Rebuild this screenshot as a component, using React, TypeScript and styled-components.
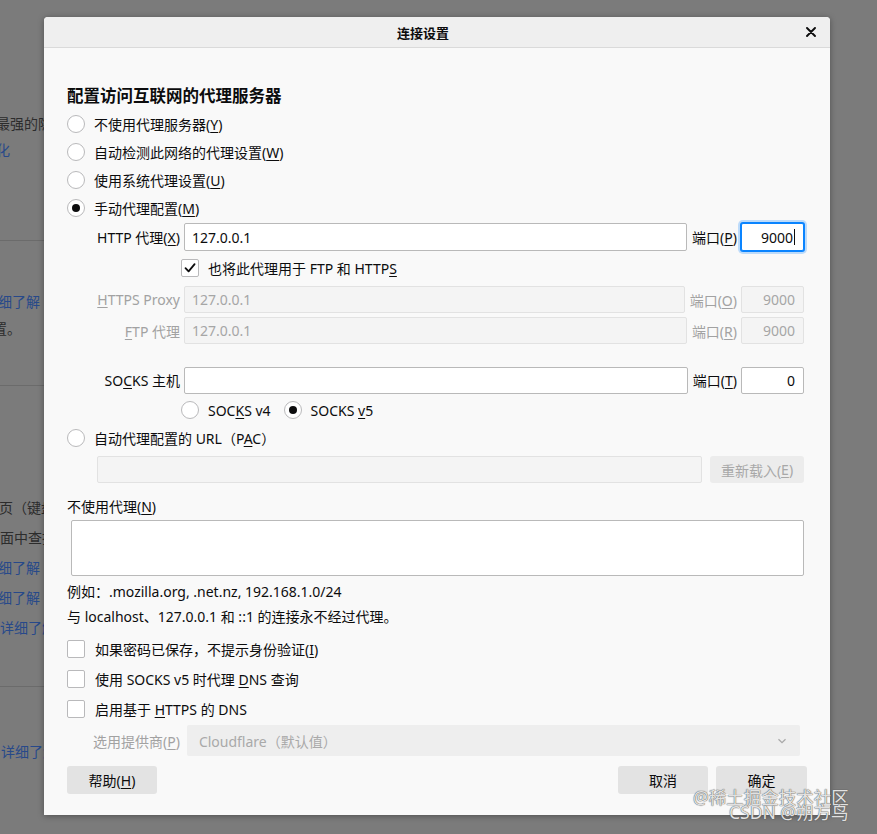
import styled, { createGlobalStyle } from 'styled-components';

const GlobalStyle = createGlobalStyle`
  html, body {
    margin: 0;
    padding: 0;
  }
  body {
    width: 877px;
    height: 834px;
    overflow: hidden;
    background: #7b7b7b;
    font-family: "Noto Sans", "Noto Sans CJK SC", sans-serif;
  }
`;

type BackItem =
  | { kind: 'text'; text: string; gap: number; shift: number; link?: boolean }
  | { kind: 'rule'; gap: number };

// the settings page behind the dimmed overlay, only its left edge shows
const backItems: BackItem[] = [
  { kind: 'text', text: '最强的隐私保护', gap: 114, shift: -4 },
  { kind: 'text', text: '优化', gap: 6, shift: -18, link: true },
  { kind: 'rule', gap: 80 },
  { kind: 'text', text: '详细了解', gap: 51, shift: -16, link: true },
  { kind: 'text', text: '设置。', gap: 7, shift: -21 },
  { kind: 'rule', gap: 46 },
  { kind: 'text', text: '页（键盘', gap: 112, shift: -1 },
  { kind: 'text', text: '面中查找', gap: 10, shift: 0 },
  { kind: 'text', text: '详细了解', gap: 10, shift: -16, link: true },
  { kind: 'text', text: '详细了解', gap: 10, shift: -16, link: true },
  { kind: 'text', text: '详细了解', gap: 10, shift: 0, link: true },
  { kind: 'rule', gap: 48 },
  { kind: 'text', text: '详细了解', gap: 55, shift: 1, link: true },
];

const Key = ({ children }: { children: string }) => <AccessKey>{children}</AccessKey>;

const CheckMark = () => (
  <svg width="14" height="14" viewBox="0 0 14 14">
    <path d="M2.5 7.2 L5.6 10.4 L11.6 3.2" fill="none" stroke="#0c0c0d" strokeWidth="1.8" strokeLinecap="round" strokeLinejoin="round" />
  </svg>
);

const App = () => {
  return (
    <>
      <GlobalStyle />
      <Screen>
        <BackPage>
          {backItems.map((item, i) =>
            item.kind === 'rule' ? (
              <BackRule key={i} $gap={item.gap} />
            ) : (
              <BackLine key={i} $gap={item.gap} $shift={item.shift} $link={item.link}>
                {item.text}
              </BackLine>
            )
          )}
        </BackPage>

        <Dialog>
          <DialogHeader>
            <DialogTitle>连接设置</DialogTitle>
            <CloseButton>
              <svg width="10" height="10" viewBox="0 0 10 10">
                <path d="M1 1 L9 9 M9 1 L1 9" stroke="#0c0c0d" strokeWidth="1.9" strokeLinecap="round" />
              </svg>
            </CloseButton>
          </DialogHeader>

          <DialogBody>
            <SectionHeading>配置访问互联网的代理服务器</SectionHeading>

            <ChoiceRow $height={28}>
              <Radio />
              <span>不使用代理服务器(<Key>Y</Key>)</span>
            </ChoiceRow>
            <ChoiceRow $height={28}>
              <Radio />
              <span>自动检测此网络的代理设置(<Key>W</Key>)</span>
            </ChoiceRow>
            <ChoiceRow $height={28}>
              <Radio />
              <span>使用系统代理设置(<Key>U</Key>)</span>
            </ChoiceRow>
            <ChoiceRow $height={28}>
              <Radio $checked />
              <span>手动代理配置(<Key>M</Key>)</span>
            </ChoiceRow>

            <FieldRow $height={30}>
              <FieldLabel>HTTP 代理(<Key>X</Key>)</FieldLabel>
              <TextBox $height={28}>127.0.0.1</TextBox>
              <PortLabel>端口(<Key>P</Key>)</PortLabel>
              <PortBox $height={28} $focused>
                9000<Caret />
              </PortBox>
            </FieldRow>

            <ChoiceRow $height={32} $indent={114} $gap={9}>
              <Checkbox $checked>
                <CheckMark />
              </Checkbox>
              <span>也将此代理用于 FTP 和 HTTP<Key>S</Key></span>
            </ChoiceRow>

            <FieldRow $height={31}>
              <FieldLabel $disabled><Key>H</Key>TTPS Proxy</FieldLabel>
              <TextBox $disabled>127.0.0.1</TextBox>
              <PortLabel $disabled>端口(<Key>O</Key>)</PortLabel>
              <PortBox $disabled>9000</PortBox>
            </FieldRow>

            <FieldRow $height={31}>
              <FieldLabel $disabled><Key>F</Key>TP 代理</FieldLabel>
              <TextBox $disabled>127.0.0.1</TextBox>
              <PortLabel $disabled>端口(<Key>R</Key>)</PortLabel>
              <PortBox $disabled>9000</PortBox>
            </FieldRow>

            <FieldRow $height={28} $mt={20}>
              <FieldLabel>SO<Key>C</Key>KS 主机</FieldLabel>
              <TextBox />
              <PortLabel>端口(<Key>T</Key>)</PortLabel>
              <PortBox>0</PortBox>
            </FieldRow>

            <VersionRow>
              <ChoiceRow $height={32} $gap={9}>
                <Radio />
                <span>SOC<Key>K</Key>S v4</span>
              </ChoiceRow>
              <ChoiceRow $height={32} $gap={9}>
                <Radio $checked />
                <span>SOCKS <Key>v</Key>5</span>
              </ChoiceRow>
            </VersionRow>

            <ChoiceRow $height={24}>
              <Radio />
              <span>自动代理配置的 URL（P<Key>A</Key>C）</span>
            </ChoiceRow>

            <PacRow>
              <TextBox $disabled />
              <DialogButton $disabled $width={94} $height={27}>
                重新载入(<Key>E</Key>)
              </DialogButton>
            </PacRow>

            <PlainLine $height={24} $mt={10}>
              不使用代理(<Key>N</Key>)
            </PlainLine>
            <TextArea />

            <PlainLine $height={22} $mt={4}>
              例如：.mozilla.org, .net.nz, 192.168.1.0/24
            </PlainLine>
            <PlainLine $height={22} $mt={3}>
              与 localhost、127.0.0.1 和 ::1 的连接永不经过代理。
            </PlainLine>

            <CheckList>
              <ChoiceRow $height={30} $gap={10}>
                <Checkbox />
                <span>如果密码已保存，不提示身份验证(<Key>I</Key>)</span>
              </ChoiceRow>
              <ChoiceRow $height={30} $gap={10}>
                <Checkbox />
                <span>使用 SOCKS v5 时代理 <Key>D</Key>NS 查询</span>
              </ChoiceRow>
              <ChoiceRow $height={30} $gap={10}>
                <Checkbox />
                <span>启用基于 <Key>H</Key>TTPS 的 DNS</span>
              </ChoiceRow>
            </CheckList>

            <ProviderRow>
              <ProviderLabel>选用提供商(<Key>P</Key>)</ProviderLabel>
              <ProviderSelect>
                <span>Cloudflare（默认值）</span>
                <svg width="10" height="6" viewBox="0 0 10 6">
                  <path d="M1.5 1.2 L5 4.6 L8.5 1.2" fill="none" stroke="#a9a9a9" strokeWidth="1.3" />
                </svg>
              </ProviderSelect>
            </ProviderRow>

            <ButtonBar>
              <DialogButton $width={90}>
                帮助(<Key>H</Key>)
              </DialogButton>
              <ButtonGroup>
                <DialogButton $width={90}>取消</DialogButton>
                <DialogButton $width={91}>确定</DialogButton>
              </ButtonGroup>
            </ButtonBar>
          </DialogBody>
        </Dialog>

        <Watermark>
          <WatermarkLine>@稀土掘金技术社区</WatermarkLine>
          <WatermarkLine $indent={36}>CSDN @朔方鸟</WatermarkLine>
        </Watermark>
      </Screen>
    </>
  );
};

export default App;

// Styled Components

const Screen = styled.div`
  position: relative;
  width: 877px;
  height: 834px;
  overflow: hidden;
  background: #7b7b7b;
`;

const BackPage = styled.div`
  display: flex;
  flex-direction: column;
  width: 260px;
`;

const BackLine = styled.div<{ $gap: number; $shift: number; $link?: boolean }>`
  margin-top: ${p => p.$gap}px;
  margin-left: ${p => p.$shift}px;
  height: 20px;
  line-height: 20px;
  font-size: 14px;
  white-space: nowrap;
  color: ${p => (p.$link ? '#27498a' : '#2c2c2c')};
`;

const BackRule = styled.div<{ $gap: number }>`
  margin-top: ${p => p.$gap}px;
  height: 1px;
  background: #6b6b6b;
`;

const Dialog = styled.div`
  position: absolute;
  left: 44px;
  top: 17px;
  width: 786px;
  height: 798px;
  display: flex;
  flex-direction: column;
  overflow: hidden;
  background: #f9f9f9;
  border-radius: 4px 4px 0 0;
  box-shadow: 0 1px 6px rgba(0, 0, 0, 0.35);
  color: #0c0c0d;
  font-size: 14px;
`;

const DialogHeader = styled.div`
  flex: none;
  display: flex;
  align-items: center;
  height: 30px;
  background: #efefef;
  border-bottom: 1px solid #dadada;
`;

const DialogTitle = styled.div`
  flex: 1;
  text-align: center;
  font-size: 13px;
  font-weight: 700;
`;

const CloseButton = styled.div`
  flex: none;
  display: flex;
  align-items: center;
  width: 28px;
  padding-left: 4px;
  box-sizing: border-box;
`;

const DialogBody = styled.div`
  flex: 1;
  display: flex;
  flex-direction: column;
  padding: 37px 26px 0 23px;
`;

const SectionHeading = styled.h2`
  margin: 0 0 3px;
  font-size: 16.5px;
  font-weight: 700;
  line-height: 22px;
`;

const AccessKey = styled.span`
  text-decoration: underline;
  text-decoration-thickness: 1px;
  text-underline-offset: 2px;
`;

const ChoiceRow = styled.div<{ $height: number; $indent?: number; $gap?: number }>`
  display: flex;
  align-items: center;
  height: ${p => p.$height}px;
  padding-left: ${p => p.$indent ?? 0}px;
  gap: ${p => p.$gap ?? 9}px;
  white-space: nowrap;
`;

const Radio = styled.span<{ $checked?: boolean }>`
  flex: none;
  display: flex;
  align-items: center;
  justify-content: center;
  width: 18px;
  height: 18px;
  box-sizing: border-box;
  border: 1px solid #b9b9bb;
  border-radius: 50%;
  background: #fff;

  &::after {
    content: '';
    display: ${p => (p.$checked ? 'block' : 'none')};
    width: 8px;
    height: 8px;
    border-radius: 50%;
    background: #0c0c0d;
  }
`;

const Checkbox = styled.span<{ $checked?: boolean }>`
  flex: none;
  display: flex;
  align-items: center;
  justify-content: center;
  width: 18px;
  height: 18px;
  box-sizing: border-box;
  border: 1px solid #b9b9bb;
  border-radius: 2px;
  background: #fff;
`;

const FieldRow = styled.div<{ $height: number; $mt?: number }>`
  display: flex;
  align-items: center;
  height: ${p => p.$height}px;
  margin-top: ${p => p.$mt ?? 0}px;
  white-space: nowrap;
`;

const FieldLabel = styled.span<{ $disabled?: boolean }>`
  flex: none;
  width: 113px;
  margin-right: 4px;
  text-align: right;
  color: ${p => (p.$disabled ? '#a2a2a2' : 'inherit')};
`;

const TextBox = styled.div<{ $disabled?: boolean; $height?: number }>`
  flex: 1;
  display: flex;
  align-items: center;
  height: ${p => p.$height ?? 27}px;
  box-sizing: border-box;
  padding: 0 7px;
  border: 1px solid ${p => (p.$disabled ? '#e2e2e2' : '#b9b9b9')};
  border-radius: 2px;
  background: ${p => (p.$disabled ? '#f4f4f4' : '#fff')};
  color: ${p => (p.$disabled ? '#a6a6a6' : 'inherit')};
`;

const PortLabel = styled.span<{ $disabled?: boolean }>`
  flex: none;
  margin: 0 4px 0 5px;
  color: ${p => (p.$disabled ? '#a2a2a2' : 'inherit')};
`;

const PortBox = styled.div<{ $disabled?: boolean; $focused?: boolean; $height?: number }>`
  flex: none;
  display: flex;
  align-items: center;
  justify-content: flex-end;
  width: 63px;
  height: ${p => p.$height ?? 27}px;
  box-sizing: border-box;
  padding-right: 8px;
  border: 1px solid ${p => (p.$focused ? '#0a84ff' : p.$disabled ? '#e2e2e2' : '#b9b9b9')};
  border-radius: 2px;
  background: ${p => (p.$disabled ? '#f4f4f4' : '#fff')};
  color: ${p => (p.$disabled ? '#a6a6a6' : 'inherit')};
  box-shadow: ${p => (p.$focused ? '0 0 0 1px #0a84ff, 0 0 0 3px rgba(10, 132, 255, 0.25)' : 'none')};
`;

const Caret = styled.span`
  width: 1px;
  height: 16px;
  margin-left: 1px;
  background: #0c0c0d;
`;

const VersionRow = styled.div`
  display: flex;
  gap: 13px;
  padding-left: 114px;
`;

const PacRow = styled.div`
  display: flex;
  align-items: center;
  gap: 8px;
  height: 29px;
  margin-top: 5px;
  padding-left: 30px;
`;

const PlainLine = styled.div<{ $height: number; $mt?: number }>`
  display: flex;
  align-items: center;
  height: ${p => p.$height}px;
  margin-top: ${p => p.$mt ?? 0}px;
  white-space: nowrap;
`;

const TextArea = styled.div`
  height: 56px;
  margin: 2px 0 0 4px;
  box-sizing: border-box;
  border: 1px solid #b9b9b9;
  border-radius: 2px;
  background: #fff;
`;

const CheckList = styled.div`
  display: flex;
  flex-direction: column;
  margin-top: 7px;
`;

const ProviderRow = styled.div`
  display: flex;
  align-items: center;
  gap: 7px;
  height: 31px;
  margin: 1px 4px 0 0;
  padding-left: 26px;
`;

const ProviderLabel = styled.span`
  flex: none;
  color: #a2a2a2;
  white-space: nowrap;
`;

const ProviderSelect = styled.div`
  flex: 1;
  display: flex;
  align-items: center;
  justify-content: space-between;
  height: 31px;
  box-sizing: border-box;
  padding: 0 13px 0 12px;
  border-radius: 2px;
  background: #eeeeee;
  color: #a9a9a9;
`;

const ButtonBar = styled.div`
  display: flex;
  justify-content: space-between;
  margin: 10px -3px 0 0;
`;

const ButtonGroup = styled.div`
  display: flex;
  gap: 8px;
`;

const DialogButton = styled.div<{ $width: number; $height?: number; $disabled?: boolean }>`
  flex: none;
  display: flex;
  align-items: center;
  justify-content: center;
  width: ${p => p.$width}px;
  height: ${p => p.$height ?? 28}px;
  border-radius: 3px;
  background: ${p => (p.$disabled ? '#ececec' : '#e3e3e3')};
  color: ${p => (p.$disabled ? '#a8a8a8' : 'inherit')};
  white-space: nowrap;
`;

const Watermark = styled.div`
  position: absolute;
  left: 693px;
  top: 790px;
  display: flex;
  flex-direction: column;
  pointer-events: none;
`;

const WatermarkLine = styled.span<{ $indent?: number }>`
  margin-left: ${p => p.$indent ?? 0}px;
  font-size: 17.5px;
  line-height: 15px;
  height: 15px;
  white-space: nowrap;
  color: rgba(245, 245, 245, 0.9);
  text-shadow: 0 0 1px #555, 0 0 1px #555;
`;
